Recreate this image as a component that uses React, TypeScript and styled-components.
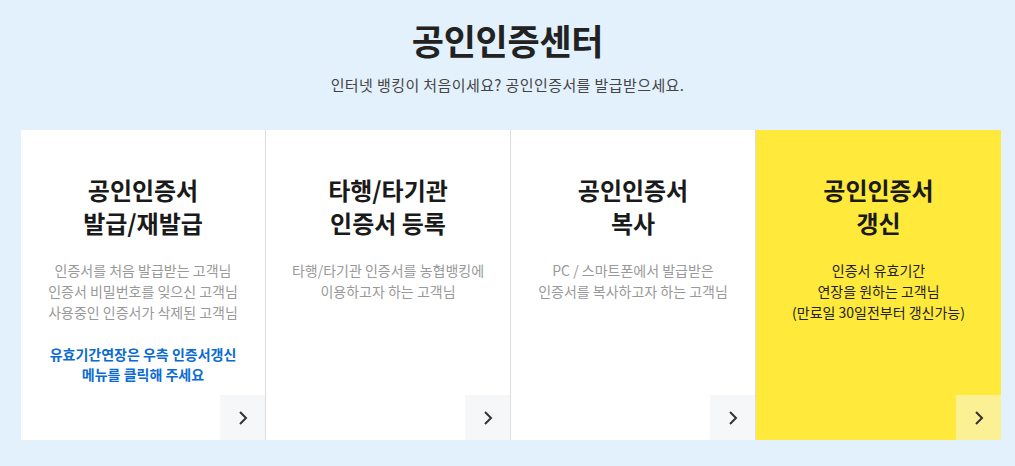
import React from "react";
import styled, { createGlobalStyle } from "styled-components";

const GlobalStyle = createGlobalStyle`
  html, body {
    margin: 0;
    padding: 0;
    background: #e3f1fd;
  }
  body {
    font-family: "Noto Sans CJK KR", "Noto Sans", sans-serif;
    -webkit-font-smoothing: antialiased;
  }
`;

const Page = styled.div`
  width: 1015px;
  height: 466px;
  background: #e3f1fd;
  overflow: hidden;
`;

const Header = styled.div`
  text-align: center;
  padding-top: 16px;
`;

const Title = styled.h1`
  margin: 0;
  font-size: 35px;
  line-height: 48px;
  font-weight: 700;
  color: #222;
  letter-spacing: -0.3px;
`;

const Subtitle = styled.p`
  margin: 11px 0 0;
  font-size: 15px;
  line-height: 20px;
  color: #444;
  letter-spacing: 0.4px;
`;

const CardRow = styled.div`
  display: grid;
  grid-template-columns: repeat(4, 245px);
  width: 980px;
  margin: 35px 0 0 21px;
  height: 310px;
`;

const Card = styled.div<{ $highlight?: boolean }>`
  position: relative;
  box-sizing: border-box;
  background: ${(p) => (p.$highlight ? "#ffea3c" : "#fff")};
  border-right: ${(p) => (p.$highlight ? "none" : "1px solid #dddddd")};
  padding-top: 43px;
  text-align: center;
`;

const CardTitle = styled.h2`
  margin: 0;
  font-size: 24px;
  line-height: 33px;
  font-weight: 700;
  color: #1a1a1a;
`;

const Desc = styled.p<{ $dark?: boolean }>`
  margin: 21px 0 0;
  font-size: 14px;
  line-height: 21px;
  color: ${(p) => (p.$dark ? "#222" : "#999")};
`;

const Notice = styled.p`
  margin: 21px 0 0;
  font-size: 14px;
  line-height: 20px;
  font-weight: 700;
  color: #0a6bd1;
`;

const ArrowButton = styled.a<{ $highlight?: boolean }>`
  position: absolute;
  right: 0;
  bottom: 0;
  width: 45px;
  height: 45px;
  display: flex;
  align-items: center;
  justify-content: center;
  background: ${(p) => (p.$highlight ? "#fcf095" : "#f6f7f9")};
  cursor: pointer;
`;

const Chevron = () => (
  <svg width="10" height="16" viewBox="0 0 10 16">
    <path d="M2 2 L8 8 L2 14" fill="none" stroke="#333" strokeWidth="2" />
  </svg>
);

const cards = [
  {
    title: ["공인인증서", "발급/재발급"],
    desc: ["인증서를 처음 발급받는 고객님", "인증서 비밀번호를 잊으신 고객님", "사용중인 인증서가 삭제된 고객님"],
    notice: ["유효기간연장은 우측 인증서갱신", "메뉴를 클릭해 주세요"],
  },
  {
    title: ["타행/타기관", "인증서 등록"],
    desc: ["타행/타기관 인증서를 농협뱅킹에", "이용하고자 하는 고객님"],
  },
  {
    title: ["공인인증서", "복사"],
    desc: ["PC / 스마트폰에서 발급받은", "인증서를 복사하고자 하는 고객님"],
  },
  {
    title: ["공인인증서", "갱신"],
    desc: ["인증서 유효기간", "연장을 원하는 고객님", "(만료일 30일전부터 갱신가능)"],
    highlight: true,
  },
];

export default function App() {
  return (
    <Page>
      <GlobalStyle />
      <Header>
        <Title>공인인증센터</Title>
        <Subtitle>인터넷 뱅킹이 처음이세요? 공인인증서를 발급받으세요.</Subtitle>
      </Header>
      <CardRow>
        {cards.map((c, i) => (
          <Card key={i} $highlight={c.highlight}>
            <CardTitle>
              {c.title[0]}
              <br />
              {c.title[1]}
            </CardTitle>
            <Desc $dark={c.highlight}>
              {c.desc.map((d, j) => (
                <React.Fragment key={j}>
                  {d}
                  {j < c.desc.length - 1 && <br />}
                </React.Fragment>
              ))}
            </Desc>
            {c.notice && (
              <Notice>
                {c.notice[0]}
                <br />
                {c.notice[1]}
              </Notice>
            )}
            <ArrowButton $highlight={c.highlight}>
              <Chevron />
            </ArrowButton>
          </Card>
        ))}
      </CardRow>
    </Page>
  );
}
